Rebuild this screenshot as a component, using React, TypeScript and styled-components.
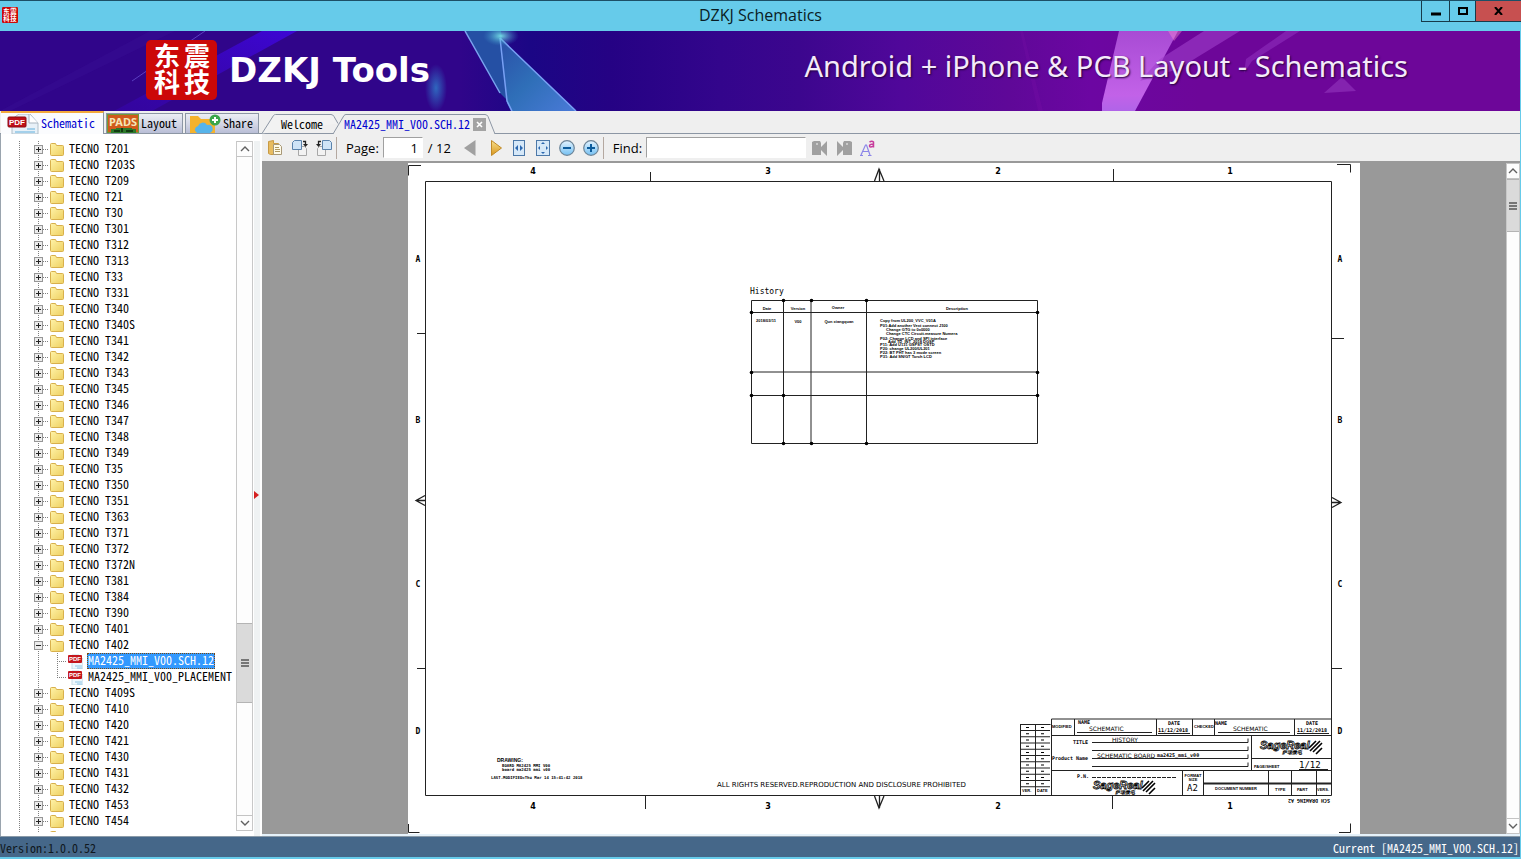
import React, { useState } from "react";
import styled, { createGlobalStyle, css } from "styled-components";

const pixelFont = css`
  font-family: "Noto Sans CJK SC", "Liberation Mono", monospace;
  font-feature-settings: "hwid";
  font-size: 12px;
  line-height: 16px;
`;

const Global = createGlobalStyle`
  * { box-sizing: border-box; }
  html, body { margin: 0; height: 100%; overflow: hidden; }
  body { background: #66cbea; color: #000; font-family: "Open Sans", "Noto Sans", sans-serif; font-size: 13px; }
  #root { height: 100%; }
  button { margin: 0; padding: 0; border: 0; background: none; color: inherit; font: inherit; }
  ul { margin: 0; padding: 0; list-style: none; }
  svg { display: block; }
`;

const Window = styled.div`
  height: 100vh;
  display: flex;
  flex-direction: column;
  padding: 0 1px 2px 0;
  background: #66cbea;
`;

/* Title bar */
const TitleBar = styled.header`
  flex: none;
  height: 31px;
  display: grid;
  grid-template-columns: 100px 1fr 100px;
  border-top: 1px solid #1c4f66;
  margin-right: -1px;
`;
const TitleIcon = styled.span`
  padding: 6px 2px;
`;
const Title = styled.h1`
  margin: 0;
  font-size: 16px;
  font-weight: 400;
  line-height: 28px;
  text-align: center;
  color: #0a1c24;
`;
const Controls = styled.div`
  display: flex;
  height: 21px;
  border-left: 1px solid #173a4a;
  border-bottom: 1px solid #173a4a;
`;
const Control = styled.button<{ $close?: boolean; $w: number }>`
  flex: ${(p) => (p.$close ? "1" : "none")};
  width: ${(p) => p.$w}px;
  display: grid;
  place-items: center;
  background: ${(p) => (p.$close ? "#c75050" : "transparent")};
  border-right: ${(p) => (p.$close ? "0" : "1px solid #173a4a")};
`;

/* Banner */
const Banner = styled.div`
  flex: none;
  position: relative;
  height: 80px;
  display: flex;
  align-items: center;
  padding: 0 112px 2px 146px;
  overflow: hidden;
  background: linear-gradient(90deg, #30058a 0 460px, #1b0685 530px, #250284 610px, #33058c 720px, #3c068e 800px, #50079a 900px, #5f0898 1010px, #6c06a2 1090px, #6d0699 1200px);
`;
const BannerArt = styled.svg`
  position: absolute;
  left: 0;
  top: 0;
`;
const Brand = styled.div`
  position: relative;
  margin-left: 12px;
  color: #fff;
  font-family: "DejaVu Sans", sans-serif;
  font-size: 34px;
  font-weight: 700;
  line-height: 40px;
  white-space: nowrap;
`;
const LogoSvg = styled.svg`
  position: relative;
  flex: none;
  overflow: visible;
`;
const Tagline = styled.div`
  position: relative;
  margin-left: auto;
  padding-bottom: 8px;
  color: #f4eafa;
  font-family: "Noto Sans", sans-serif;
  font-size: 29px;
  line-height: 36px;
  white-space: nowrap;
  text-shadow: 1px 1px 2px #22003a;
`;

/* Work area */
const Work = styled.main`
  flex: 1;
  min-height: 0;
  display: grid;
  grid-template-columns: 262px minmax(0, 1fr);
  background: #efefef;
  border-bottom: 1px solid #8a9aa8;
`;
const Side = styled.section`
  min-height: 0;
  display: flex;
  flex-direction: column;
`;
const SideTabs = styled.div`
  flex: none;
  height: 23px;
  display: flex;
  align-items: flex-end;
  border-bottom: 1px solid #8c96a4;
`;
const SideTab = styled.button<{ $active?: boolean; $w: number }>`
  ${pixelFont}
  width: ${(p) => p.$w}px;
  height: ${(p) => (p.$active ? 23 : 20)}px;
  margin: 0 1px ${(p) => (p.$active ? -1 : 0)}px 1px;
  display: flex;
  align-items: center;
  gap: 2px;
  overflow: hidden;
  white-space: nowrap;
  color: ${(p) => (p.$active ? "#0000d0" : "#000")};
  background: ${(p) => (p.$active ? "#fbfcfe" : "linear-gradient(#eceef4, #d4d7e6 50%, #b9bed6)")};
  border: 1px solid #8c96a4;
  border-width: ${(p) => (p.$active ? "2px 1px 0 0" : "1px 1px 0 1px")};
  border-top-color: ${(p) => (p.$active ? "#f3a93c" : "#8c96a4")};
`;
const TabText = styled.span`
  padding-bottom: 2px;
`;
const SideBody = styled.div`
  flex: 1;
  min-height: 0;
  display: grid;
  grid-template-columns: minmax(0, 1fr) 17px 9px;
  background: #fff;
  border-left: 1px solid #9aa4ae;
  padding-top: 7px;
`;
const TreeView = styled.div`
  overflow: hidden;
  min-height: 0;
  margin-bottom: 4px;
  padding-left: 18px;
`;
const vDots = "repeating-linear-gradient(180deg, #808080 0 1px, transparent 1px 2px)";
const hDots = "repeating-linear-gradient(90deg, #808080 0 1px, transparent 1px 2px)";
const Branch = styled.ul`
  background: ${vDots} 0 0 / 1px 100% no-repeat, ${vDots} 19px 0 / 1px 100% no-repeat;
`;
const Row = styled.li`
  height: 16px;
  display: flex;
  align-items: center;
  padding-left: 15px;
`;
const Toggle = styled.button`
  width: 9px;
  height: 9px;
  margin-right: 7px;
  flex: none;
  background: #f2f2f2;
`;
const DotLink = styled.i<{ $w: number }>`
  width: ${(p) => p.$w}px;
  height: 1px;
  margin-left: ${(p) => (p.$w > 6 ? "0" : "-7px")};
  margin-right: 1px;
  flex: none;
  background: ${hDots};
`;
const NodeLabel = styled.button<{ $on?: boolean }>`
  ${pixelFont}
  line-height: 14px;
  margin-left: 4px;
  padding: 0 1px 2px;
  white-space: nowrap;
  color: ${(p) => (p.$on ? "#fff" : "#000")};
  background: ${(p) => (p.$on ? "#3399ff" : "transparent")};
  outline: ${(p) => (p.$on ? "1px dotted #7a4a10" : "0")};
  outline-offset: -1px;
`;
const Child = styled.li<{ $last?: boolean }>`
  height: 16px;
  display: flex;
  align-items: center;
  padding-left: 38px;
  background: ${vDots} 38px 0 / 1px ${(p) => (p.$last ? "8px" : "16px")} no-repeat;
`;
const ScrollTrack = styled.div<{ $inset?: boolean }>`
  display: flex;
  flex-direction: column;
  min-height: 0;
  margin-bottom: ${(p) => (p.$inset ? 5 : 0)}px;
  background: #fdfdfd;
  border-left: 1px solid #c8c8c8;
  border-right: 1px solid #c8c8c8;
`;
const ScrollButton = styled.button`
  flex: none;
  height: 16px;
  display: grid;
  place-items: center;
  border: 1px solid #c4c4c4;
  border-width: 1px 0;
`;
const Spacer = styled.div<{ $grow: number }>`
  flex: ${(p) => p.$grow} 1 0;
`;
const Thumb = styled.div<{ $h: number }>`
  flex: none;
  height: ${(p) => p.$h}px;
  display: grid;
  place-items: center;
  background: #dadada;
  border: 1px solid #b4b4b4;
  border-width: 1px 0;
`;
const Splitter = styled.div`
  display: grid;
  place-items: center start;
  padding-top: 12px;
  background: #eff2f3;
  border-left: 1px solid #fff;
  border-right: 2px solid #fff;
`;

/* Document pane */
const DocPane = styled.section`
  min-width: 0;
  min-height: 0;
  display: flex;
  flex-direction: column;
`;
const DocTabs = styled.div`
  flex: none;
  height: 23px;
  display: flex;
  align-items: flex-end;
  border-bottom: 1px solid #8c96a4;
`;
const DocTab = styled.div<{ $w: number; $active?: boolean }>`
  position: relative;
  flex: none;
  width: ${(p) => p.$w}px;
  height: 20px;
  margin-left: ${(p) => (p.$active ? -6 : 0)}px;
  margin-bottom: -1px;
  padding-left: ${(p) => (p.$active ? 11 : 19)}px;
  display: flex;
  align-items: center;
  gap: 3px;
`;
const TabShape = styled.svg`
  position: absolute;
  left: 0;
  top: 0;
`;
const TabLabel = styled.button<{ $active?: boolean }>`
  ${pixelFont}
  position: relative;
  white-space: nowrap;
  color: ${(p) => (p.$active ? "#0000d0" : "#000")};
`;
const CloseTab = styled.button`
  position: relative;
  width: 13px;
  height: 13px;
  display: grid;
  place-items: center;
  background: #a3a3a3;
`;
const Toolbar = styled.div`
  flex: none;
  height: 29px;
  display: flex;
  align-items: center;
  padding-left: 2px;
  border-bottom: 2px solid #999;
`;
const ToolButton = styled.button`
  flex: none;
  width: 24px;
  height: 24px;
  display: grid;
  place-items: center;
`;
const FindButtons = styled.div`
  display: flex;
  margin-left: 2px;
`;
const Divider = styled.i`
  flex: none;
  width: 1px;
  height: 22px;
  background: #b4a8a0;
`;
const ToolLabel = styled.label`
  flex: none;
  margin-left: 9px;
  line-height: 20px;
  white-space: nowrap;
`;
const Field = styled.input<{ $w: number }>`
  flex: none;
  width: ${(p) => p.$w}px;
  height: 21px;
  margin-left: 4px;
  padding: 0 4px;
  border: 1px solid #fff;
  border-top-color: #a0a0a0;
  border-left-color: #a0a0a0;
  background: #fff;
  font: inherit;
  text-align: right;
  outline: 0;
`;
const PageTotal = styled.span`
  width: 36px;
  padding-left: 5px;
  white-space: nowrap;
`;
const Viewer = styled.div`
  flex: 1;
  min-height: 0;
  display: grid;
  grid-template-columns: minmax(0, 1fr) 14px;
  background: #999;
  border-bottom: 2px solid #e6f2fa;
`;
const Canvas = styled.div`
  overflow: hidden;
  display: flex;
  justify-content: center;
`;
const Sheet = styled.svg`
  flex: none;
  background: #fff;
  font-family: "DejaVu Sans Mono", monospace;
`;

/* Status bar */
const Status = styled.footer`
  ${pixelFont}
  flex: none;
  height: 20px;
  display: flex;
  justify-content: space-between;
  padding: 3px 1px 0 0;
  background: #456789;
  color: #101820;
`;
const Current = styled.span`
  color: #fff;
`;

const FolderIcon = () => (
  <svg width="14" height="13" viewBox="0 0 14 13">
    <defs>
      <linearGradient id="folder" x1="0" y1="0" x2="1" y2="1">
        <stop offset="0" stopColor="#fff3a8" />
        <stop offset="1" stopColor="#eed061" />
      </linearGradient>
    </defs>
    <path d="M.5 1.5q0-1 1-1h4l1 2h6q1 0 1 1v8q0 1-1 1h-11q-1 0-1-1z" fill="url(#folder)" stroke="#d8b04c" />
  </svg>
);

const PdfIcon = () => (
  <svg width="15" height="16" viewBox="0 0 15 16">
    <path d="M4 2h7l4 4v10H4z" fill="#eef7fc" stroke="#c5dbe6" />
    <path d="M7 13h7M9 15h5" stroke="#8cc4e4" />
    <rect x="0" y="2" width="14" height="8" rx="1" fill="#c4161c" />
    <text x="7" y="8" fontSize="6" fontWeight="700" textAnchor="middle" fill="#fff" fontFamily="Liberation Sans, sans-serif">PDF</text>
  </svg>
);

const PdfTabIcon = () => (
  <svg width="32" height="20" viewBox="0 0 32 20">
    <path d="M12 0h11l8 9v11H5V5z" fill="#e8f1f8" stroke="#b0bec8" />
    <path d="M22 0v9h9" fill="#fff" stroke="#a8b4be" />
    <path d="M20 15h8M8 18h20" stroke="#a4d0ea" strokeWidth="2" />
    <rect x="1" y="3" width="18" height="10" rx="1" fill="#c01018" stroke="#8c0a10" />
    <text x="10" y="11" fontSize="8" fontWeight="700" textAnchor="middle" fill="#fff" fontFamily="Liberation Sans, sans-serif">PDF</text>
  </svg>
);

const PadsIcon = () => (
  <svg width="32" height="19" viewBox="0 0 32 19">
    <rect width="32" height="19" fill="#d05a1c" stroke="#6f9a3a" strokeWidth="2" />
    <text x="16" y="12" fontSize="11" fontWeight="700" textAnchor="middle" fill="#f4e6b8" fontFamily="Noto Sans, sans-serif">PADS</text>
    <path d="M4 19v-4h5v-1h16v1h4v4z" fill="#2c7a2a" />
    <path d="M7 17h6M19 17h7M15 14v4" stroke="#123c12" strokeWidth="2" />
  </svg>
);

const ShareIcon = () => (
  <svg width="32" height="19" viewBox="0 0 32 19">
    <path d="M1 2h8l3 3h14v14H1z" fill="#f5b22c" />
    <path d="M8 19a5 4 0 0 1 1-7 5 5 0 0 1 9-1 4 4 0 0 1 3 8z" fill="#57b4ea" />
    <circle cx="26" cy="6" r="5.5" fill="#3aa64a" />
    <path d="M26 3v6M23 6h6" stroke="#fff" strokeWidth="2" />
  </svg>
);

const Chevron = ({ down }: { down?: boolean }) => (
  <svg width="10" height="6" viewBox="0 0 10 6">
    <path d={down ? "M1 1l4 4 4-4" : "M1 5l4-4 4 4"} fill="none" stroke="#606060" strokeWidth="1.4" />
  </svg>
);
const Grip = () => (
  <svg width="8" height="8" viewBox="0 0 8 8">
    <path d="M0 1h8M0 4h8M0 7h8" stroke="#555" strokeWidth="1.6" />
  </svg>
);

const Logo = ({ small }: { small?: boolean }) => {
  const [w, h, left, right, top, bottom] = small ? [60, 60, 17, 43, 26, 52] : [71, 60, 21, 51, 26, 52];
  return (
    <LogoSvg width={small ? 16 : w} height={small ? 16 : h} viewBox={`0 0 ${w} ${h}`}>
      <rect width={w} height={h} rx="5" fill="#cc0808" />
      <g fill="#fff" fontFamily="Noto Sans CJK SC, sans-serif" fontWeight="700" fontSize={small ? 24 : 26} textAnchor="middle">
        <text x={left} y={top}>东</text>
        <text x={right} y={top}>震</text>
        <text x={left} y={bottom}>科</text>
        <text x={right} y={bottom}>技</text>
      </g>
    </LogoSvg>
  );
};

const Art = () => (
  <BannerArt width="1521" height="80" viewBox="0 0 1521 80">
    <defs>
      <linearGradient id="tri" x1="0" y1="0" x2="1" y2="1">
        <stop offset="0" stopColor="#2a4fa8" />
        <stop offset=".5" stopColor="#2f6fb8" />
        <stop offset="1" stopColor="#4a7ad8" />
      </linearGradient>
      <linearGradient id="pink" x1="0" y1="0" x2="0" y2="1">
        <stop offset="0" stopColor="#a84bd4" />
        <stop offset=".8" stopColor="#c262e8" />
        <stop offset="1" stopColor="#b064e8" />
      </linearGradient>
      <linearGradient id="beam" x1="1" y1="0" x2="0" y2="1">
        <stop offset="0" stopColor="#3d06d4" />
        <stop offset="1" stopColor="#3705b0" stopOpacity=".5" />
      </linearGradient>
      <radialGradient id="glow">
        <stop offset="0" stopColor="#2f78c8" stopOpacity=".85" />
        <stop offset="1" stopColor="#2f78c8" stopOpacity="0" />
      </radialGradient>
      <radialGradient id="spark">
        <stop offset="0" stopColor="#7cecec" stopOpacity=".9" />
        <stop offset="1" stopColor="#3a90c8" stopOpacity="0" />
      </radialGradient>
    </defs>
    <path d="M262 0h35L152 80h-38z" fill="url(#beam)" />
    <path d="M205 0L132 50" stroke="#5b3fc0" strokeWidth="1" />
    <path d="M150 0h25L10 80H0z" fill="#4a24a8" opacity=".15" />
    <ellipse cx="436" cy="57" rx="11" ry="24" fill="url(#glow)" />
    <path d="M465 0h36l7 70-8-8z" fill="#2550a4" />
    <path d="M465 0L500 62" stroke="#7aa4f0" strokeWidth="1.5" />
    <path d="M500 7L576 80H511l-4-8z" fill="url(#tri)" />
    <path d="M500 7L576 80M500 7l7 63 5 10" fill="none" stroke="#78a0f4" strokeWidth="1.5" />
    <ellipse cx="501" cy="5" rx="18" ry="10" fill="url(#spark)" />
    <path d="M1119 0h59l-43 80h-33v-8z" fill="url(#pink)" />
    <path d="M1204 0h36l-62 38-38 12 20-22z" fill="#a040cc" opacity=".6" />
    <path d="M1286 0h14l-48 30-8 12 2-14z" fill="#9a3cc8" opacity=".45" />
    <path d="M1342 46l14 14-32 2z" fill="#8e30b8" opacity=".7" />
    <path d="M1168 0h14l-8 10z" fill="#ff8ed0" opacity=".4" />
    <path d="M1020 0h3l20 80h-5z" fill="#7a10a8" opacity=".25" />
  </BannerArt>
);

const models = "T201 T203S T209 T21 T30 T301 T312 T313 T33 T331 T340 T340S T341 T342 T343 T345 T346 T347 T348 T349 T35 T350 T351 T363 T371 T372 T372N T381 T384 T390 T401 T402 T409S T410 T420 T421 T430 T431 T432 T453 T454".split(" ");
const files = ["MA2425_MMI_V00.SCH.12", "MA2425_MMI_V00_PLACEMENT"];

const Tree = () => {
  const [picked, setPicked] = useState(files[0]);
  return (
    <TreeView>
      <Branch>
        {models.map((m) => (
          <React.Fragment key={m}>
            <Row>
              <Toggle aria-label={`Expand TECNO ${m}`}>
                <svg width="9" height="9" viewBox="0 0 9 9">
                  <rect x=".5" y=".5" width="8" height="8" fill="#ececec" stroke="#969696" />
                  <path d={m === "T402" ? "M2 4.5h5" : "M2 4.5h5M4.5 2v5"} stroke="#222" />
                </svg>
              </Toggle>
              <DotLink $w={6} />
              <FolderIcon />
              <NodeLabel>TECNO {m}</NodeLabel>
            </Row>
            {m === "T402" &&
              files.map((f, i) => (
                <Child key={f} $last={i === 1}>
                  <DotLink $w={10} />
                  <PdfIcon />
                  <NodeLabel $on={picked === f} onClick={() => setPicked(f)}>{f}</NodeLabel>
                </Child>
              ))}
          </React.Fragment>
        ))}
        <Row>
          <Toggle aria-label="Expand" />
          <DotLink $w={6} />
          <FolderIcon />
        </Row>
      </Branch>
    </TreeView>
  );
};

type TProps = { x: number; y: number; s?: number; b?: boolean; a?: "start" | "middle"; f?: string; children: React.ReactNode };
const T = ({ x, y, s = 5, b, a = "start", f, children }: TProps) => (
  <text x={x} y={y} fontSize={s} fontWeight={b ? 700 : 400} textAnchor={a} fontFamily={f}>{children}</text>
);
const sans = "Liberation Sans, sans-serif";
const wide = "DejaVu Sans, sans-serif";

const SageReal = ({ x, y }: { x: number; y: number }) => (
  <g transform={`translate(${x} ${y})`}>
    <text x="0" y="9" fontSize="11" fontWeight="700" fontStyle="italic" fontFamily={sans} fill="#fff" stroke="#000" strokeWidth=".8">SageReal</text>
    <text x="22" y="14" fontSize="5" fontWeight="700" fontStyle="italic" fontFamily={sans}>萨瑞微电</text>
    <path d="M49 8l7-7M50 11l10-10M53 12l9-9M56 14l6-6" stroke="#000" strokeWidth="1.6" fill="none" />
  </g>
);

const notes: [number, number, string][] = [
  [880, 322, "Copy from UL200_VVC_V01A"],
  [880, 327, "P01:Add another Vext connect J100"],
  [886, 331, "Change GTG to 0x0000"],
  [886, 335, "Change CTC Circuit.measure Numera"],
  [880, 340, "P02: Change LCD and SPI interface"],
  [888, 343, "Add TD_INT_2018 DGSP"],
  [880, 346, "P11: Add U131 GSPST OSTD"],
  [880, 350, "P20: change UL200/UL201"],
  [880, 354, "P22: BT PHT has 3 mode screen"],
  [880, 358, "P31: Add SN/GT Torch LCD"],
];
const nodes = [[751, 312], [783, 300], [811, 300], [866, 300], [1037, 312], [751, 372], [1037, 372], [751, 395], [783, 395], [1037, 395], [783, 443], [811, 443], [866, 443]];
const revRows = [0, 1, 2, 3, 4, 5, 6, 7, 8, 9];

const Schematic = () => (
  <Sheet width="952" height="671" viewBox="408 163 952 671" role="img" aria-label="Schematic history sheet">
    <g fill="none" stroke="#222">
      <path d="M425.5 181.5h906v614h-906z" />
      <path d="M650.5 172v9M1113.5 169v12M645.5 796v13M1112.5 796v13M417 333.5h8M417 668.5h8M1331 338.5h13M1331 668.5h11" />
      <path d="M874.5 181l4.5-12 5 12M879.5 169v12M874.5 796l4.5 12 5-12M879.5 796v12M425 495.5l-9 5 9 5M416 500.5h9M1332 497.5l9 5-9 5M1331 502.5h10" strokeWidth="1.3" />
      <path d="M421 165.5h-12.5v10M1337 164.5h13.5v8M408.5 824v8.5h11M1339 832.5h11.5v-9" />
      <path d="M751.5 300.5h286v143h-286zM751 312.5h286M751 372h286M751 395.5h286M783.5 300v143M811 300v143M866.5 300v143" />
      <path d="M1051.5 719h280M1051.5 719v76M1051 735.5h280M1051 770.5h280M1074.5 719v16M1156.5 719v16M1192.5 719v16M1214.5 719v16M1294.5 719v16M1251.5 735v35M1251 758.5h80M1182.5 770v25M1203.5 770v25M1268.5 770v25M1291.5 770v25M1316.5 770v25" />
      <path d="M1020.5 724.5h30M1020.5 724v71M1035.5 724v71M1020 795.5h30" />
      {revRows.map((r) => (
        <path key={r} d={`M1020 ${730.5 + r * 6.25}h30`} />
      ))}
      <path d="M1204 783.5h127" strokeWidth="2" />
      <path d="M1077 732.5h75M1158 733.5h32M1218 732.5h72M1297 733.5h32M1299 769.5h29M1092 742.5h156v-4M1092 750.5h156v-4M1092 758.5h156v-4M1092 766.5h156v-4" />
      <path d="M1092 777.5h85" strokeDasharray="4 1" />
    </g>
    {nodes.map(([x, y]) => (
      <circle key={`${x}-${y}`} cx={x + 0.5} cy={y + 0.5} r="1.8" />
    ))}
    {revRows.map((r) => (
      <path key={r} d={`M1026 ${727.5 + r * 6.25}h3M1041 ${727.5 + r * 6.25}h3`} stroke="#000" />
    ))}
    {[[533, "4"], [768, "3"], [998, "2"], [1230, "1"]].map(([x, n]) => (
      <g key={n}>
        <T x={Number(x)} y={174} s={8} b a="middle" f={wide}>{n}</T>
        <T x={Number(x)} y={809} s={8} b a="middle" f={wide}>{n}</T>
      </g>
    ))}
    {[[262, "A"], [423, "B"], [587, "C"], [734, "D"]].map(([y, n]) => (
      <g key={n}>
        <T x={418} y={Number(y)} s={8} b a="middle">{n}</T>
        <T x={1340} y={Number(y)} s={8} b a="middle">{n}</T>
      </g>
    ))}

    <T x={750} y={294} s={8}>History</T>
    <T x={767} y={310} s={4} b a="middle" f={sans}>Date</T>
    <T x={798} y={310} s={4} b a="middle" f={sans}>Version</T>
    <T x={838} y={309} s={4} b a="middle" f={sans}>Owner</T>
    <T x={957} y={310} s={4} b a="middle" f={sans}>Description</T>
    <T x={766} y={322} s={4} b a="middle" f={sans}>2018/03/11</T>
    <T x={798} y={323} s={4} b a="middle" f={sans}>V00</T>
    <T x={839} y={323} s={4} b a="middle" f={sans}>Qun xiangquan</T>
    {notes.map(([x, y, t]) => (
      <T key={y} x={x} y={y} s={4} b f={sans}>{t}</T>
    ))}

    <T x={497} y={762} s={5} b f={sans}>DRAWING:</T>
    <T x={502} y={767} s={4} b>BOARD MA2425 MMI V00</T>
    <T x={502} y={771} s={4} b>board ma2425 mmi v00</T>
    <T x={491} y={779} s={4} b>LAST.MODIFIED=Thu Mar 14 15:41:42 2018</T>
    <T x={717} y={787} s={7} f={wide}>ALL RIGHTS RESERVED.REPRODUCTION AND DISCLOSURE PROHIBITED</T>

    <T x={1022} y={792} s={4} b f={sans}>VER.</T>
    <T x={1037} y={792} s={4} b f={sans}>DATE</T>
    <T x={1052} y={728} s={4} b f={sans}>MODIFIED</T>
    <T x={1078} y={724} s={5} b>NAME</T>
    <T x={1089} y={731} s={6} f={wide}>SCHEMATIC</T>
    <T x={1168} y={725} s={5} b>DATE</T>
    <T x={1158} y={732} s={5} b>11/12/2018</T>
    <T x={1194} y={728} s={4} b f={sans}>CHECKED</T>
    <T x={1215} y={725} s={5} b>NAME</T>
    <T x={1233} y={731} s={6} f={wide}>SCHEMATIC</T>
    <T x={1306} y={725} s={5} b>DATE</T>
    <T x={1297} y={732} s={5} b>11/12/2018</T>
    <T x={1073} y={744} s={5} b>TITLE</T>
    <T x={1112} y={742} s={6} f={wide}>HISTORY</T>
    <T x={1052} y={760} s={5} b>Product Name</T>
    <T x={1097} y={758} s={6} f={wide}>SCHEMATIC BOARD</T>
    <T x={1157} y={757} s={5} b>ma2425_mmi_v00</T>
    <SageReal x={1260} y={740} />
    <T x={1254} y={768} s={4} b f={sans}>PAGE/SHEET</T>
    <T x={1299} y={768} s={9}>1/12</T>
    <T x={1077} y={778} s={5} b>P.N.</T>
    <SageReal x={1093} y={780} />
    <T x={1193} y={777} s={4} b a="middle" f={sans}>FORMAT</T>
    <T x={1193} y={781} s={4} b a="middle" f={sans}>SIZE</T>
    <T x={1187} y={791} s={9}>A2</T>
    <T x={1215} y={790} s={4} b f={sans}>DOCUMENT NUMBER</T>
    <T x={1275} y={791} s={4} b f={sans}>TYPE</T>
    <T x={1297} y={791} s={4} b f={sans}>PART</T>
    <T x={1317} y={791} s={4} b f={sans}>VERS.</T>
    <g transform="rotate(180 1309 801)">
      <T x={1309} y={803} s={5} b a="middle">SCH DRAWING A2</T>
    </g>
  </Sheet>
);

const CopyIcon = () => (
  <svg width="18" height="18" viewBox="0 0 18 18">
    <path d="M1.5 2.5l5-1v3h5v11h-8l-2-1z" fill="#e8bc60" stroke="#c89a44" />
    <path d="M6.5 5.5h6l2 2v8h-8z" fill="#fffbe8" stroke="#a89878" />
    <path d="M8 8.5h4M8 10.5h5M8 12.5h5" stroke="#b09860" />
  </svg>
);
const RotateIcon = ({ left }: { left?: boolean }) => (
  <svg width="18" height="18" viewBox="0 0 18 18">
    <g transform={left ? "translate(18 0) scale(-1 1)" : undefined}>
      <path d="M7.5 7.5h6l2 2v7h-8z" fill="#f2f2f2" stroke="#a8a8a8" />
      <path d="M1.5 3.5l2-2h7v9h-9z" fill="#cfe4f7" stroke="#5b83ac" />
      <path d="M12 2.5h2.5v3" fill="none" stroke="#222" strokeWidth="1.3" />
      <path d="M12 5h5l-2.5 3z" fill="#222" />
    </g>
  </svg>
);
const PrevIcon = () => (
  <svg width="18" height="18" viewBox="0 0 18 18">
    <path d="M13.5 1v16L2 9z" fill="#a0a0a0" />
  </svg>
);
const NextIcon = () => (
  <svg width="18" height="18" viewBox="0 0 18 18">
    <defs>
      <linearGradient id="next" x1="0" y1="0" x2="0" y2="1">
        <stop offset="0" stopColor="#f8e08c" />
        <stop offset="1" stopColor="#d8951c" />
      </linearGradient>
    </defs>
    <path d="M5.5 1.5v15L15.5 9z" fill="url(#next)" stroke="#c08a28" />
  </svg>
);
const FitIcon = ({ page }: { page?: boolean }) => (
  <svg width="18" height="18" viewBox="0 0 18 18">
    <rect x={page ? 2.5 : 3.5} y="1.5" width={page ? 13 : 11} height="15" fill="#d6e8f8" stroke="#4c78a8" />
    <path d="M8 6L5 9l3 3zM10 6l3 3-3 3z" fill={page ? "none" : "#2c68b0"} />
    {page && <path d="M9 3l2 2H7zM9 15l2-2H7zM4 9l2-2v4zM14 9l-2-2v4z" fill="#2c68b0" />}
  </svg>
);
const ZoomIcon = ({ plus }: { plus?: boolean }) => (
  <svg width="18" height="18" viewBox="0 0 18 18">
    <defs>
      <linearGradient id="disc" x1="0" y1="0" x2="0" y2="1">
        <stop offset="0" stopColor="#e2f3ff" />
        <stop offset="1" stopColor="#74c0f2" />
      </linearGradient>
    </defs>
    <circle cx="9" cy="9" r="7.3" fill="url(#disc)" stroke="#6d8598" strokeWidth="1.2" />
    <path d={plus ? "M5 9h8M9 5v8" : "M5 9h8"} stroke="#0c5c9c" strokeWidth="2" />
  </svg>
);
const FindIcon = ({ next }: { next?: boolean }) => (
  <svg width="18" height="18" viewBox="0 0 18 18">
    <g transform={next ? "translate(18 0) scale(-1 1)" : undefined}>
      <path d="M1 3l2-1h6l1 2v4l6-6v15l-6-6v5H1z" fill="#a0a0a0" />
      <circle cx="6" cy="5" r="1" fill="#d8d8d8" />
    </g>
  </svg>
);
const CaseIcon = () => (
  <svg width="18" height="18" viewBox="0 0 18 18">
    <path d="M2 16L6.5 6h1L11 16M4 12.5h6M1 16.5h3M9 16.5h3.5" fill="none" stroke="#8c86e8" strokeWidth="1.2" />
    <path d="M10.500 3q2.500-1.500 4 0v5.500M14.500 5q-4 0-4 2t4 0" fill="none" stroke="#c83c9c" strokeWidth="1.500" />
  </svg>
);

export default function App() {
  return (
    <Window>
      <Global />
      <TitleBar>
        <TitleIcon><Logo small /></TitleIcon>
        <Title>DZKJ Schematics</Title>
        <Controls>
          <Control $w={28} aria-label="Minimize">
            <svg width="10" height="10"><path d="M0 8h10" stroke="#000" strokeWidth="3" /></svg>
          </Control>
          <Control $w={26} aria-label="Maximize">
            <svg width="10" height="8"><rect x="1" y="1" width="8" height="6" fill="none" stroke="#000" strokeWidth="2" /></svg>
          </Control>
          <Control $w={45} $close aria-label="Close">
            <svg width="9" height="8"><path d="M1 0l7 8M8 0L1 8" stroke="#000" strokeWidth="2" /></svg>
          </Control>
        </Controls>
      </TitleBar>
      <Banner>
        <Art />
        <Logo />
        <Brand>DZKJ Tools</Brand>
        <Tagline>Android + iPhone &amp; PCB Layout - Schematics</Tagline>
      </Banner>
      <Work>
        <Side>
          <SideTabs>
            <SideTab $active $w={103}><svg width="4" height="1" /><PdfTabIcon /><TabText>Schematic</TabText></SideTab>
            <SideTab $w={77}><PadsIcon /><TabText>Layout</TabText></SideTab>
            <SideTab $w={74}><svg width="1" height="1" /><ShareIcon /><TabText>Share</TabText></SideTab>
          </SideTabs>
          <SideBody>
            <Tree />
            <ScrollTrack $inset>
              <ScrollButton aria-label="Scroll up"><Chevron /></ScrollButton>
              <Spacer $grow={466} />
              <Thumb $h={80}><Grip /></Thumb>
              <Spacer $grow={112} />
              <ScrollButton aria-label="Scroll down"><Chevron down /></ScrollButton>
            </ScrollTrack>
            <Splitter>
              <svg width="5" height="10" viewBox="0 0 5 10"><path d="M0 1l5 4-5 4z" fill="#d42020" /></svg>
            </Splitter>
          </SideBody>
        </Side>
        <DocPane>
          <DocTabs>
            <DocTab $w={77}>
              <TabShape width="77" height="20" viewBox="0 0 77 20">
                <path d="M0 19.5L11.5 1.5q1-1 2-1H69q2 0 3 2l4 7" fill="#f2f2f2" stroke="#8c96a4" />
              </TabShape>
              <TabLabel>Welcome</TabLabel>
            </DocTab>
            <DocTab $w={163} $active>
              <TabShape width="163" height="20" viewBox="0 0 163 20">
                <path d="M0 20L11 1.5q1-1 2-1H152q2 0 3 2l7 17.5" fill="#efefef" stroke="#8c96a4" />
              </TabShape>
              <TabLabel $active>MA2425_MMI_V00.SCH.12</TabLabel>
              <CloseTab aria-label="Close tab">
                <svg width="7" height="7"><path d="M1 1l5 5M6 1L1 6" stroke="#fff" strokeWidth="1.6" /></svg>
              </CloseTab>
            </DocTab>
          </DocTabs>
          <Toolbar>
            <ToolButton aria-label="Copy"><CopyIcon /></ToolButton>
            <ToolButton aria-label="Rotate right"><RotateIcon /></ToolButton>
            <ToolButton aria-label="Rotate left"><RotateIcon left /></ToolButton>
            <Divider />
            <ToolLabel htmlFor="page">Page:</ToolLabel>
            <Field id="page" $w={40} defaultValue="1" />
            <PageTotal>/ 12</PageTotal>
            <ToolButton aria-label="Previous page"><PrevIcon /></ToolButton>
            <ToolButton aria-label="Next page"><NextIcon /></ToolButton>
            <ToolButton aria-label="Fit width"><FitIcon /></ToolButton>
            <ToolButton aria-label="Fit page"><FitIcon page /></ToolButton>
            <ToolButton aria-label="Zoom out"><ZoomIcon /></ToolButton>
            <ToolButton aria-label="Zoom in"><ZoomIcon plus /></ToolButton>
            <Divider />
            <ToolLabel htmlFor="find">Find:</ToolLabel>
            <Field id="find" $w={160} />
            <FindButtons>
              <ToolButton aria-label="Find previous"><FindIcon /></ToolButton>
              <ToolButton aria-label="Find next"><FindIcon next /></ToolButton>
              <ToolButton aria-label="Match case"><CaseIcon /></ToolButton>
            </FindButtons>
          </Toolbar>
          <Viewer>
            <Canvas><Schematic /></Canvas>
            <ScrollTrack>
              <ScrollButton aria-label="Scroll up"><Chevron /></ScrollButton>
              <Thumb $h={53}><Grip /></Thumb>
              <Spacer $grow={1} />
              <ScrollButton aria-label="Scroll down"><Chevron down /></ScrollButton>
            </ScrollTrack>
          </Viewer>
        </DocPane>
      </Work>
      <Status>
        <span>Version:1.0.0.52</span>
        <Current>Current [MA2425_MMI_V00.SCH.12]</Current>
      </Status>
    </Window>
  );
}
